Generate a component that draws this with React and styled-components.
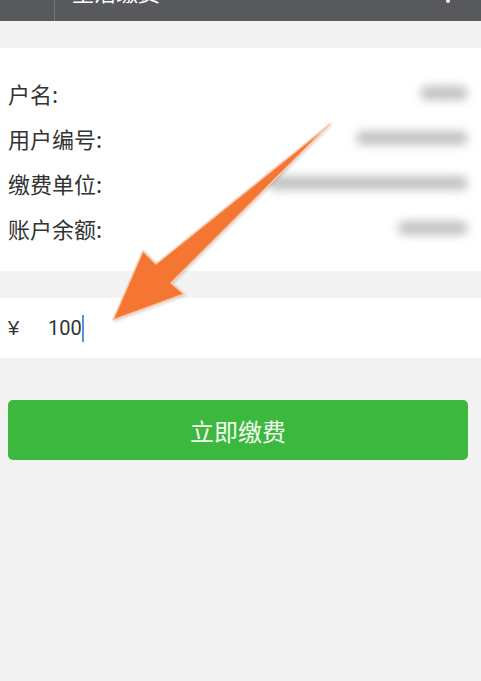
import React from 'react';
import styled, { createGlobalStyle } from 'styled-components';

const GlobalStyle = createGlobalStyle`
  html, body {
    margin: 0;
    padding: 0;
    background: #f3f3f3;
  }
  body {
    font-family: "Noto Sans CJK SC", "Noto Sans", sans-serif;
  }
`;

const Page = styled.div`
  position: relative;
  width: 481px;
  height: 681px;
  overflow: hidden;
  background: #f3f3f3;
`;

const TopBar = styled.div`
  display: flex;
  align-items: flex-end;
  height: 21px;
  background: #58595d;
  overflow: hidden;
`;

const BackArea = styled.div`
  width: 55px;
  height: 100%;
  border-right: 1px solid #77787c;
  box-sizing: border-box;
`;

/* title sits mostly above the visible strip, only its bottom edge shows */
const BarTitle = styled.div`
  flex: 1;
  margin: 0 0 19px 17px;
  color: #fff;
  font-size: 22px;
  line-height: 22px;
  white-space: nowrap;
`;

const BarIcon = styled.div`
  width: 4px;
  height: 3px;
  margin: 0 31px 18px 0;
  background: #e8e8e8;
  border-radius: 0 0 2px 2px;
`;

const InfoCard = styled.div`
  margin-top: 27px;
  background: #fff;
  padding: 22px 13px 21px 8px;
`;

const Row = styled.div`
  display: flex;
  align-items: center;
  justify-content: space-between;
  height: 45px;
`;

const Label = styled.span`
  font-size: 22px;
  color: #333;
`;

const Hidden = styled.span`
  display: block;
  width: ${(p) => p.w}px;
  height: 14px;
  border-radius: 7px;
  background: #c2c2c2;
  filter: blur(5px);
`;

const AmountRow = styled.div`
  display: flex;
  align-items: center;
  margin-top: 27px;
  height: 60px;
  background: #fff;
  padding-left: 8px;
  font-size: 20px;
  color: #333;
`;

const Currency = styled.span`
  width: 40px;
  font-family: "Liberation Sans", "Noto Sans CJK SC", sans-serif;
`;

const Amount = styled.span`
  font-family: "Roboto", "Noto Sans", sans-serif;
`;

const Caret = styled.span`
  display: inline-block;
  width: 2px;
  height: 27px;
  background: #5b8fd6;
`;

const PayButton = styled.button`
  display: block;
  margin: 42px 13px 0 8px;
  width: 460px;
  height: 60px;
  border: none;
  border-radius: 5px;
  background: #3db83f;
  color: #f2fbf2;
  font-family: inherit;
  font-size: 24px;
`;

const Pointer = styled.svg`
  position: absolute;
  left: 0;
  top: 0;
  pointer-events: none;
`;

const rows = [
  { label: '户名:', w: 48 },
  { label: '用户编号:', w: 112 },
  { label: '缴费单位:', w: 200 },
  { label: '账户余额:', w: 70 },
];

const App = () => (
  <Page>
    <GlobalStyle />
    <TopBar>
      <BackArea />
      <BarTitle>生活缴费</BarTitle>
      <BarIcon />
    </TopBar>
    <InfoCard>
      {rows.map((r) => (
        <Row key={r.label}>
          <Label>{r.label}</Label>
          <Hidden w={r.w} />
        </Row>
      ))}
    </InfoCard>
    <AmountRow>
      <Currency>¥</Currency>
      <Amount>100</Amount>
      <Caret />
    </AmountRow>
    <PayButton>立即缴费</PayButton>

    {/* callout arrow pointing at the amount field */}
    <Pointer width="481" height="681">
      <defs>
        <filter id="soft" x="-10%" y="-10%" width="120%" height="120%">
          <feDropShadow dx="1" dy="1" stdDeviation="1.5" floodColor="#000" floodOpacity="0.18" />
        </filter>
      </defs>
      <polygon
        points="330,124 156,264 143,251 113,320 184,294 171,283"
        fill="#f47632"
        stroke="#f9c7a3"
        strokeWidth="1.5"
        strokeLinejoin="round"
        filter="url(#soft)"
      />
    </Pointer>
  </Page>
);

export default App;
